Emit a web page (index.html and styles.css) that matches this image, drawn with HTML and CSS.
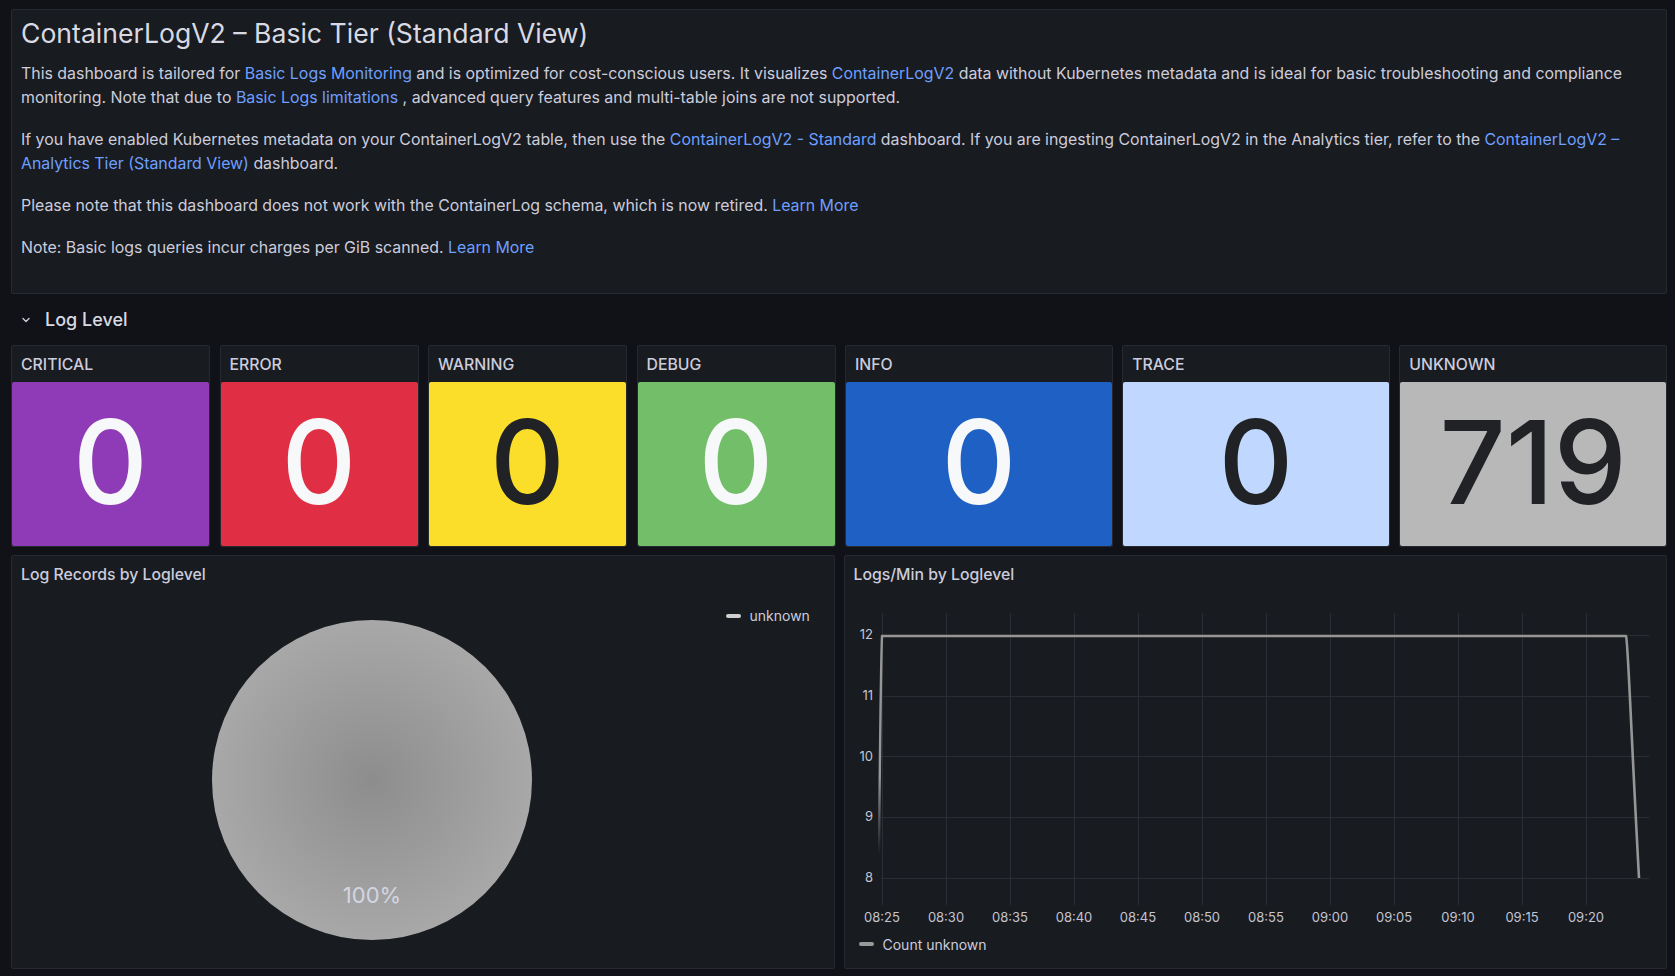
FILE: index.html
```html
<!DOCTYPE html>
<html lang="en">
<head>
<meta charset="utf-8">
<title>ContainerLogV2 – Basic Tier (Standard View)</title>
<link rel="stylesheet" href="styles.css">
</head>
<body>
<div class="dash">
  <section class="panel text-panel">
    <h1>ContainerLogV2 – Basic Tier (Standard View)</h1>
    <p>This dashboard is tailored for <a href="#">Basic Logs Monitoring</a> and is optimized for cost-conscious users. It visualizes <a href="#">ContainerLogV2</a> data without Kubernetes metadata and is ideal for basic troubleshooting and compliance monitoring. Note that due to <a href="#">Basic Logs limitations</a> , advanced query features and multi-table joins are not supported.</p>
    <p>If you have enabled Kubernetes metadata on your ContainerLogV2 table, then use the <a href="#">ContainerLogV2 - Standard</a> dashboard. If you are ingesting ContainerLogV2 in the Analytics tier, refer to the <a href="#">ContainerLogV2 – Analytics Tier (Standard View)</a> dashboard.</p>
    <p>Please note that this dashboard does not work with the ContainerLog schema, which is now retired. <a href="#">Learn More</a></p>
    <p>Note: Basic logs queries incur charges per GiB scanned. <a href="#">Learn More</a></p>
  </section>

  <div class="row-header">
    <svg class="chev" viewBox="0 0 16 16" width="16" height="16"><path d="M5 6.5 L8 9.5 L11 6.5" fill="none" stroke="#ccccdc" stroke-width="1.4" stroke-linecap="round" stroke-linejoin="round"/></svg>
    <span>Log Level</span>
  </div>

  <div class="stat-row">
    <div class="panel stat w3"><div class="ptitle">CRITICAL</div><div class="sval c-purple">0</div></div>
    <div class="panel stat w3"><div class="ptitle">ERROR</div><div class="sval c-red">0</div></div>
    <div class="panel stat w3"><div class="ptitle">WARNING</div><div class="sval c-yellow">0</div></div>
    <div class="panel stat w3"><div class="ptitle">DEBUG</div><div class="sval c-green">0</div></div>
    <div class="panel stat w4"><div class="ptitle">INFO</div><div class="sval c-blue">0</div></div>
    <div class="panel stat w4"><div class="ptitle">TRACE</div><div class="sval c-lblue">0</div></div>
    <div class="panel stat w4"><div class="ptitle">UNKNOWN</div><div class="sval c-gray">719</div></div>
  </div>

  <div class="chart-row">
    <div class="panel chart">
      <div class="ptitle">Log Records by Loglevel</div>
      <div class="pie-body">
        <div class="pie-area">
          <svg width="320" height="320" viewBox="0 0 320 320">
            <defs>
              <radialGradient id="pg" cx="50%" cy="50%" r="50%">
                <stop offset="0%" stop-color="#8d8d8d"/>
                <stop offset="100%" stop-color="#a8a8a8"/>
              </radialGradient>
            </defs>
            <circle cx="160" cy="160" r="160" fill="url(#pg)"/>
            <text x="160" y="277" class="pie-label" text-anchor="middle" dominant-baseline="middle">100%</text>
          </svg>
        </div>
        <div class="pie-legend">
          <span class="mark mark-light"></span><span>unknown</span>
        </div>
      </div>
    </div>

    <div class="panel chart">
      <div class="ptitle">Logs/Min by Loglevel</div>
      <svg class="ts" width="820" height="340" viewBox="0 0 820 340">
        <defs>
          <clipPath id="plot"><rect x="33" y="0" width="790" height="300"/></clipPath>
          <linearGradient id="fade" x1="0" y1="262" x2="0" y2="44" gradientUnits="userSpaceOnUse">
            <stop offset="0%" stop-color="#969696" stop-opacity="0"/>
            <stop offset="35%" stop-color="#969696" stop-opacity="1"/>
            <stop offset="100%" stop-color="#969696" stop-opacity="1"/>
          </linearGradient>
        </defs>
        <g class="grid">
          <line x1="36" y1="43.5" x2="804" y2="43.5"/>
          <line x1="36" y1="104.5" x2="804" y2="104.5"/>
          <line x1="36" y1="164.5" x2="804" y2="164.5"/>
          <line x1="36" y1="225.5" x2="804" y2="225.5"/>
          <line x1="36" y1="286.5" x2="804" y2="286.5"/>
          <line x1="37.5" y1="21" x2="37.5" y2="313"/>
          <line x1="101.5" y1="21" x2="101.5" y2="313"/>
          <line x1="165.5" y1="21" x2="165.5" y2="313"/>
          <line x1="229.5" y1="21" x2="229.5" y2="313"/>
          <line x1="293.5" y1="21" x2="293.5" y2="313"/>
          <line x1="357.5" y1="21" x2="357.5" y2="313"/>
          <line x1="421.5" y1="21" x2="421.5" y2="313"/>
          <line x1="485.5" y1="21" x2="485.5" y2="313"/>
          <line x1="549.5" y1="21" x2="549.5" y2="313"/>
          <line x1="613.5" y1="21" x2="613.5" y2="313"/>
          <line x1="677.5" y1="21" x2="677.5" y2="313"/>
          <line x1="741.5" y1="21" x2="741.5" y2="313"/>
        </g>
        <g class="axis" text-anchor="end">
          <text x="28" y="43">12</text>
          <text x="28" y="104">11</text>
          <text x="28" y="165">10</text>
          <text x="28" y="225">9</text>
          <text x="28" y="286">8</text>
        </g>
        <g class="axis" text-anchor="middle">
          <text x="37" y="326">08:25</text>
          <text x="101" y="326">08:30</text>
          <text x="165" y="326">08:35</text>
          <text x="229" y="326">08:40</text>
          <text x="293" y="326">08:45</text>
          <text x="357" y="326">08:50</text>
          <text x="421" y="326">08:55</text>
          <text x="485" y="326">09:00</text>
          <text x="549" y="326">09:05</text>
          <text x="613" y="326">09:10</text>
          <text x="677" y="326">09:15</text>
          <text x="741" y="326">09:20</text>
        </g>
        <path clip-path="url(#plot)" d="M34 262 C34.8 180 35.6 80 37 44" fill="none" stroke="url(#fade)" stroke-width="2.4" stroke-linecap="round"/>
        <path d="M37 44 L781 44 C783 48 785 120 794 286" fill="none" stroke="#969696" stroke-width="2.6" stroke-linejoin="round"/>
      </svg>
      <div class="ts-legend"><span class="mark mark-dark"></span><span>Count unknown</span></div>
    </div>
  </div>
</div>
</body>
</html>
```

FILE: styles.css
```css
* { box-sizing: border-box; }
html, body { margin: 0; padding: 0; }
body {
  background: #111217;
  width: 1675px;
  height: 976px;
  overflow: hidden;
  font-family: Inter, "Noto Sans", "Liberation Sans", sans-serif;
  color: #ccccdc;
}
.dash {
  padding: 9px 8px 0 11px;
  display: flex;
  flex-direction: column;
}
.panel {
  background: #181b1f;
  border: 1px solid #26292f;
  border-radius: 2px;
}
.text-panel {
  height: 285px;
  padding: 7px 10px 0 9px;
}
.text-panel h1 {
  font-size: 26.6px;
  font-weight: 400;
  line-height: 33px;
  margin: 0 0 12px;
  color: #d8d9e3;
}
.text-panel p {
  font-size: 15.9px;
  line-height: 24px;
  margin: 0 0 18px;
}
.text-panel a { color: #6e9fff; text-decoration: none; }

.row-header {
  height: 51px;
  display: flex;
  align-items: center;
  padding-left: 7px;
  gap: 11px;
  font-size: 18px;
  font-weight: 500;
  color: #d8d9e3;
}
.chev { display: block; }

.stat-row {
  display: flex;
  gap: 9.5px;
  height: 202px;
}
.stat { display: flex; flex-direction: column; }
.w3 { flex: 0 0 199px; }
.w4 { flex: 1 1 0; }
.ptitle {
  height: 36px;
  flex: none;
  display: flex;
  align-items: center;
  padding-left: 9px;
  font-size: 15.8px;
  font-weight: 500;
  color: #ccccdc;
}
.sval {
  flex: 1;
  display: flex;
  align-items: center;
  justify-content: center;
  font-size: 116px;
  font-weight: 500;
  line-height: 1;
  border-radius: 2px;
  padding-bottom: 4px;
}
.c-purple { background: #8f3bb8; color: #f7f8fa; }
.c-red { background: #e02f44; color: #f7f8fa; }
.c-yellow { background: #fade2a; color: #202226; }
.c-green { background: #73bf69; color: #f7f8fa; }
.c-blue { background: #1f60c4; color: #f7f8fa; }
.c-lblue { background: #c0d8ff; color: #202226; }
.c-gray { background: #b8b8b8; color: #202226; }

.chart-row {
  display: flex;
  gap: 9px;
  margin-top: 8px;
  height: 414px;
}
.chart { flex: 1 1 0; display: flex; flex-direction: column; }

.pie-body { flex: 1; display: flex; }
.pie-area {
  flex: 1;
  display: flex;
  align-items: center;
  justify-content: center;
  padding-left: 6px;
}
.pie-area svg { display: block; }
.pie-label { font-size: 22px; fill: #d4d5e4; font-family: Inter, sans-serif; }
.pie-legend {
  width: 108px;
  padding-top: 14px;
  display: flex;
  align-items: flex-start;
  gap: 9px;
  font-size: 14px;
  line-height: 20px;
}
.mark {
  display: inline-block;
  width: 15px;
  height: 4px;
  border-radius: 2px;
  margin-top: 8px;
}
.mark-light { background: #d0d0d0; }
.mark-dark { background: #9a9a9a; margin-top: 0; }

.ts { display: block; }
.grid line { stroke: #2a2d33; stroke-width: 1; }
.axis text { font-size: 13px; fill: #c4c4d2; dominant-baseline: middle; font-family: Inter, sans-serif; }
.ts-legend {
  height: 24px;
  display: flex;
  align-items: center;
  gap: 9px;
  padding-left: 14px;
  font-size: 14px;
}
```
